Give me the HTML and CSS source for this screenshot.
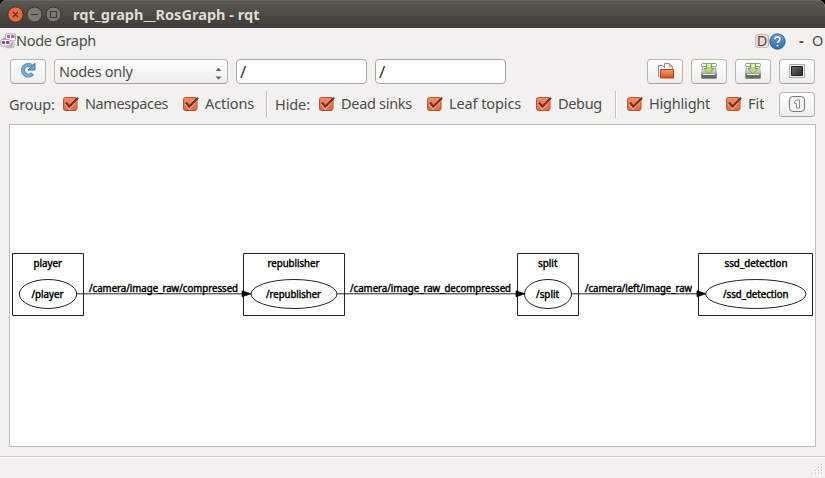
FILE: index.html
```html
<!DOCTYPE html>
<html lang="en">
<head>
<meta charset="utf-8">
<title>rqt_graph__RosGraph - rqt</title>
<link rel="stylesheet" href="styles.css">
</head>
<body>
<svg class="defs" width="0" height="0" aria-hidden="true">
  <defs>
    <linearGradient id="orange" x1="0" y1="0" x2="0" y2="1"><stop offset="0" stop-color="#fa8c62"/><stop offset="1" stop-color="#e9673c"/></linearGradient>
    <linearGradient id="folder" x1="0" y1="0" x2="0" y2="1"><stop offset="0" stop-color="#f5a07c"/><stop offset="1" stop-color="#dc4a15"/></linearGradient>
    <linearGradient id="disk" x1="0" y1="0" x2="0" y2="1"><stop offset="0" stop-color="#eeeeec"/><stop offset="1" stop-color="#b5b5b3"/></linearGradient>
    <linearGradient id="screen" x1="0" y1="0" x2="1" y2="1"><stop offset="0" stop-color="#686868"/><stop offset="1" stop-color="#2c2c2c"/></linearGradient>
    <linearGradient id="blue" x1="0" y1="0" x2="0" y2="1"><stop offset="0" stop-color="#6c9fd0"/><stop offset="1" stop-color="#2c6aa8"/></linearGradient>
    <symbol id="check" viewBox="0 0 17 16">
      <rect x="1.500" y="1.500" width="13.500" height="13" rx="2" fill="url(#orange)" stroke="#b65233"/>
      <path d="M4 7.200 7.200 11.500 13.500 4" fill="none" stroke="#f8a284" stroke-width="3.600"/>
      <path d="M4 6.500 7.300 10.500 16 1.700" fill="none" stroke="#6b3424" stroke-width="2.200"/>
    </symbol>
    <symbol id="save" viewBox="0 0 16 16">
      <path d="M1.500 3h13l1 8h-15z" fill="url(#disk)" stroke="#aaa"/>
      <path d="M.5 11h15v3.500q0 1-1 1h-13q-1 0-1-1z" fill="#666865" stroke="#8a8a88"/>
      <path d="M2 11.500h12" stroke="#eee"/>
      <rect x=".5" y=".5" width="15" height="3" rx="1" fill="#f5faee" stroke="#83a861"/>
      <path d="M5.500 1v4.500H3L8 11l5-5.500h-2.500V1" fill="#b5dc78" stroke="#7ba34a"/>
      <path d="M6.500 1h3v3h-3z" fill="#eaf5d8"/>
    </symbol>
  </defs>
</svg>
<div class="window">
  <header class="titlebar">
    <svg width="62" height="28" viewBox="0 0 62 28">
      <g stroke="#35342f"><circle cx="15.500" cy="14.500" r="7.700" fill="#ef683b"/><circle cx="34.500" cy="14.500" r="7.500" fill="#7b7971"/><circle cx="53.500" cy="14.500" r="7.500" fill="#7b7971"/></g>
      <path d="m13 12 5 5m0-5-5 5M31 14.500h7M50.500 11.500h6v6h-6z" fill="none" stroke="#3d3c36" stroke-width="1.200"/>
    </svg>
    <h1>rqt_graph__RosGraph - rqt</h1>
  </header>
  <div class="dock">
    <svg width="16" height="16" viewBox="0 0 16 16"><path d="M4 5v7l7 1 2-4" fill="none" stroke="#aaa" stroke-width="2"/><rect x="5.500" y=".8" width="10" height="7" rx="1" fill="#faf8fa" stroke="#aaa5aa"/><path d="M7 2h3v3H7zm4 0h3.500v3H11z" fill="#a46aa6"/><rect x=".8" y="6.500" width="9" height="6.500" rx="1" fill="#faf8fa" stroke="#aaa5aa"/><path d="M2 8h3v3H2zm4 0h3v3H6z" fill="#954799"/><path d="M6 14.500h7l2-4" fill="none" stroke="#bbb" stroke-width="1.500"/></svg>
    <span class="dock-title">Node Graph</span>
    <span class="dock-d">D</span>
    <svg width="17" height="17" viewBox="0 0 17 17"><circle cx="8.500" cy="8.500" r="7.700" fill="url(#blue)" stroke="#2867a3"/><path d="M5.800 6.200Q6 4 8.500 4t2.500 2.100c0 2-2.500 2-2.500 4M8.500 12v1.500" fill="none" stroke="#fff" stroke-width="1.600"/></svg>
    <span class="dock-min">-</span><span class="dock-o">O</span>
  </div>
  <div class="tools">
    <button class="btn refresh"><svg width="16" height="16" viewBox="0 0 16 16"><path d="M12.500 11.500A5.300 5.300 0 1 1 11.500 4" fill="none" stroke="#427eb8" stroke-width="4"/><path d="M15 1v7H8z" fill="#6da4d8" stroke="#427eb8"/><path d="M12.200 11.800A5.300 5.300 0 1 1 11.500 4" fill="none" stroke="#73a8da" stroke-width="2.800"/></svg></button>
    <div class="select"><span>Nodes only</span><svg width="7" height="13" viewBox="0 0 7 13"><path d="M.5 4 3.500.8l3 3.200zM.5 9.500l3 3.200 3-3.200z" fill="#666"/></svg></div>
    <div class="field">/</div>
    <div class="field">/</div>
    <button class="btn push"><svg class="lift" width="17" height="16" viewBox="0 0 17 16"><path d="M1.500 14V2.500h4l2 2v-4h5l3 3V13" fill="#f3f3f1" stroke="#8f8f8c"/><path d="M12.500.500v3h3" fill="none" stroke="#a5a5a2"/><path d="M3.500 6.500h13v8.500h-13z" fill="url(#folder)" stroke="#bd3d0e"/></svg></button>
    <button class="btn"><svg width="16" height="16"><use href="#save"/></svg></button>
    <button class="btn"><svg width="16" height="16"><use href="#save"/></svg></button>
    <button class="btn"><svg width="16" height="14" viewBox="0 0 16 14"><path d="M.5.500h15v13H.5z" fill="#eee" stroke="#aaa"/><path d="M2.500 2.500h11v9h-11z" fill="url(#screen)" stroke="#222"/></svg></button>
  </div>
  <div class="options">
    <span class="w-group">Group:</span>
    <label class="namespaces"><svg width="17" height="16"><use href="#check"/></svg><span>Namespaces</span></label>
    <label class="actions"><svg width="17" height="16"><use href="#check"/></svg><span>Actions</span></label>
    <i class="rule"></i>
    <span class="w-hide">Hide:</span>
    <label class="sinks"><svg width="17" height="16"><use href="#check"/></svg><span>Dead sinks</span></label>
    <label class="topics"><svg width="17" height="16"><use href="#check"/></svg><span>Leaf topics</span></label>
    <label class="debug"><svg width="17" height="16"><use href="#check"/></svg><span>Debug</span></label>
    <i class="rule"></i>
    <label class="highlight"><svg width="17" height="16"><use href="#check"/></svg><span>Highlight</span></label>
    <label class="fit"><svg width="17" height="16"><use href="#check"/></svg><span>Fit</span></label>
    <button class="btn push"><svg width="16" height="16" viewBox="0 0 16 16"><rect x=".5" y=".5" width="15" height="15" rx="3.500" fill="#f5f5f3" stroke="#777775"/><path d="M5.500 5.500 7.500 4h3v8h-3V7.500h-2z" fill="#fff" stroke="#8c8c8a"/></svg></button>
  </div>
  <main class="graph">
    <svg width="805" height="321" viewBox="10 125 805 321">
      <g class="shape">
        <path d="M12.500 253.500h71v62h-71zM243.500 253.500h101v62h-101zM517.500 253.500h61v62h-61zM698.500 253.500h114v62h-114z"/>
        <ellipse cx="48" cy="294" rx="28.700" ry="14.500"/><ellipse cx="294" cy="294" rx="43" ry="14.500"/><ellipse cx="548" cy="294" rx="23.500" ry="14.500"/><ellipse cx="755.800" cy="294" rx="50.200" ry="14.500"/>
        <path d="M77 293.800h166M337 293.800h179M571.500 293.800h126"/>
      </g>
      <path d="M242 290.800l9 3-9 3zM516 290.800l9 3-9 3zM697 290.800l9 3-9 3z" stroke="#000" stroke-width=".7"/>
      <g class="names">
        <text x="33.500" y="267" textLength="28.500" lengthAdjust="spacingAndGlyphs">player</text><text x="31.500" y="297.700" textLength="32" lengthAdjust="spacingAndGlyphs">/player</text>
        <text x="267.500" y="267" textLength="52" lengthAdjust="spacingAndGlyphs">republisher</text><text x="266" y="297.700" textLength="55" lengthAdjust="spacingAndGlyphs">/republisher</text>
        <text x="538" y="267" textLength="19.500" lengthAdjust="spacingAndGlyphs">split</text><text x="536" y="297.700" textLength="23" lengthAdjust="spacingAndGlyphs">/split</text>
        <text x="724.500" y="267" textLength="63" lengthAdjust="spacingAndGlyphs">ssd_detection</text><text x="723" y="297.700" textLength="65.500" lengthAdjust="spacingAndGlyphs">/ssd_detection</text>
        <text x="89" y="291.700" textLength="149" lengthAdjust="spacingAndGlyphs">/camera/image_raw/compressed</text>
        <text x="350" y="291.700" textLength="161" lengthAdjust="spacingAndGlyphs">/camera/image_raw_decompressed</text>
        <text x="585" y="291.700" textLength="107" lengthAdjust="spacingAndGlyphs">/camera/left/image_raw</text>
      </g>
    </svg>
  </main>
  <footer class="status"><svg width="12" height="12" viewBox="0 0 12 12"><path d="M9 0h2v2H9zM6 3h2v2H6zM9 3h2v2H9zM3 6h2v2H3zM6 6h2v2H6zM9 6h2v2H9zM0 9h2v2H0zM3 9h2v2H3zM6 9h2v2H6zM9 9h2v2H9z" fill="#fff"/><path d="M9 0h1v1H9zM6 3h1v1H6zM9 3h1v1H9zM3 6h1v1H3zM6 6h1v1H6zM9 6h1v1H9zM0 9h1v1H0zM3 9h1v1H3zM6 9h1v1H6zM9 9h1v1H9z" fill="#b5b2ac"/></svg></footer>
</div>
</body>
</html>
```
FILE: styles.css
```css
* { box-sizing: border-box; }
body { margin: 0; background: #000; font: 14.500px/20px "Noto Sans", "Open Sans", sans-serif; color: #4c4c4c; }
svg { display: block; flex: none; }
.defs { position: absolute; }
.window { width: 825px; height: 478px; background: #f2f1f0; display: flex; flex-direction: column; border-radius: 7px 7px 0 0; overflow: hidden; }
.titlebar { height: 28px; flex: none; display: flex; align-items: center; background: linear-gradient(#5b5950, #3d3c38); box-shadow: inset 0 1px #6b695f; }
h1 { margin: 0 0 0 11px; font-size: 14.500px; font-weight: 700; color: #dfdbd2; white-space: nowrap; letter-spacing: .03px; line-height: 28px; }
.dock { height: 27px; flex: none; display: flex; align-items: center; white-space: nowrap; padding-bottom: 1px; }
.dock span { padding-bottom: 2px; }
.dock-title { width: 82px; letter-spacing: -.3px; }
.dock .dock-d { width: 14px; height: 14px; padding: 0; margin-left: auto; border: 1px solid #d4b9aa; border-radius: 3px; background: #eedcd2; line-height: 11px; text-align: center; }
.dock-min { margin-left: 13px; width: 13px; font-weight: 700; }
.dock-o { width: 13px; }
.tools { height: 33px; flex: none; padding: 4px 10px 0; display: flex; align-items: flex-start; }
.btn { width: 36px; height: 25px; flex: none; padding: 0 0 1px; display: grid; place-items: center; border: 1px solid #b9b7b4; border-bottom-color: #a3a19e; border-radius: 4px; background: linear-gradient(#fff, #eeedec); }
.btn + .btn { margin-left: 8px; }
.refresh { padding-bottom: 3px; }
.lift { margin-bottom: 1px; }
.push { margin-left: auto; }
.select { width: 174px; height: 25px; margin-left: 8px; padding: 0 5px 0 4px; display: flex; align-items: center; justify-content: space-between; border: 1px solid #b9b7b4; border-bottom-color: #a3a19e; border-radius: 4px; background: linear-gradient(#fff, #eeedec); letter-spacing: -.3px; }
.select span { padding-bottom: 1px; }
.select svg { margin-top: 4px; }
.field { width: 131px; height: 25px; margin-left: 8px; padding: 1px 3px; border: 1px solid #a9a7a3; border-radius: 4px; background: #fff; font-size: 17px; line-height: 22px; color: #333; }
.options { height: 36px; flex: none; padding: 0 10px 4px 9px; display: flex; align-items: center; white-space: nowrap; }
.options label { display: flex; gap: 6px; align-items: center; }
.options label span { padding-bottom: 2px; }
.w-group { width: 53px; letter-spacing: -.2px; }
.w-hide { width: 43px; letter-spacing: -.1px; }
.namespaces { width: 120px; letter-spacing: -.4px; }
.actions { width: 84px; letter-spacing: -.1px; }
.rule { width: 2px; height: 27px; border-left: 1px solid #c5c3c0; border-right: 1px solid #fff; margin-right: 7px; }
.sinks { width: 108px; letter-spacing: -.3px; }
.topics { width: 109px; letter-spacing: -.1px; }
.debug { width: 80px; letter-spacing: -.35px; }
.highlight { width: 99px; margin-left: 2px; letter-spacing: -.2px; }
.fit { width: 45px; }
.graph { width: 807px; height: 323px; flex: none; margin-left: 9px; border: 1px solid #bfbdb7; background: #fff; }
.shape { fill: none; stroke: #222; stroke-width: 1; }
.names { font: 10.500px "Noto Sans", sans-serif; fill: #000; stroke: #000; stroke-width: .45px; }
.status { flex: 1; margin-top: 9px; padding: 0 1px 2px; border-top: 1px solid #d2d0cd; box-shadow: inset 0 1px #fff; display: flex; justify-content: flex-end; align-items: flex-end; }
```
